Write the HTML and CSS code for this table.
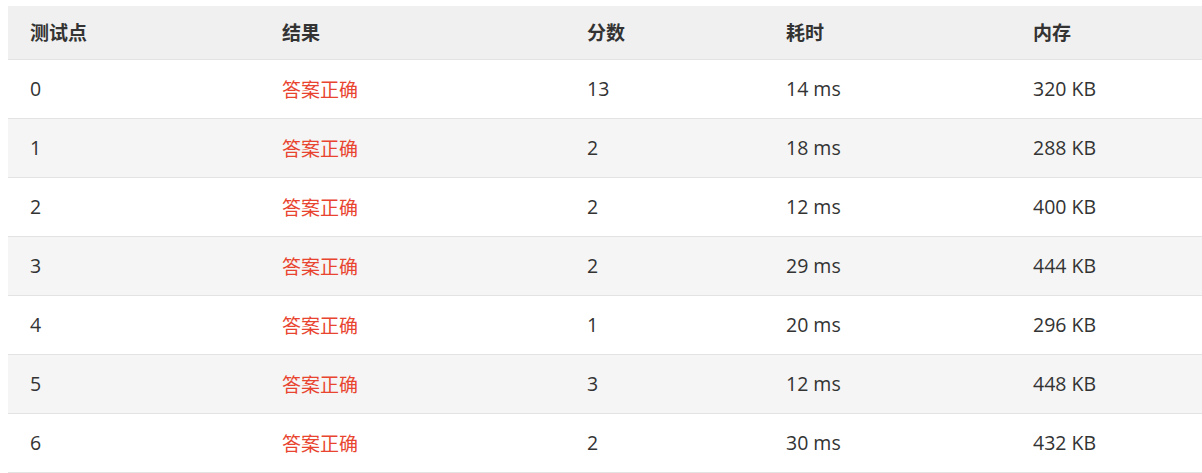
FILE: index.html
```html
<!DOCTYPE html>
<html lang="zh-CN">
<head>
<meta charset="utf-8">
<title>测试点结果</title>
<link rel="stylesheet" href="styles.css">
</head>
<body>
<table class="result-table">
  <colgroup>
    <col class="c1"><col class="c2"><col class="c3"><col class="c4"><col class="c5">
  </colgroup>
  <thead>
    <tr><th>测试点</th><th>结果</th><th>分数</th><th>耗时</th><th>内存</th></tr>
  </thead>
  <tbody>
    <tr><td>0</td><td class="ok">答案正确</td><td>13</td><td>14 ms</td><td>320 KB</td></tr>
    <tr><td>1</td><td class="ok">答案正确</td><td>2</td><td>18 ms</td><td>288 KB</td></tr>
    <tr><td>2</td><td class="ok">答案正确</td><td>2</td><td>12 ms</td><td>400 KB</td></tr>
    <tr><td>3</td><td class="ok">答案正确</td><td>2</td><td>29 ms</td><td>444 KB</td></tr>
    <tr><td>4</td><td class="ok">答案正确</td><td>1</td><td>20 ms</td><td>296 KB</td></tr>
    <tr><td>5</td><td class="ok">答案正确</td><td>3</td><td>12 ms</td><td>448 KB</td></tr>
    <tr><td>6</td><td class="ok">答案正确</td><td>2</td><td>30 ms</td><td>432 KB</td></tr>
  </tbody>
</table>
</body>
</html>
```
FILE: styles.css
```css
html, body {
  margin: 0;
  padding: 0;
  background: #fff;
  overflow: hidden;
}
body {
  padding: 6px 0 0 8px;
  font-family: "Open Sans", "Noto Sans CJK SC", sans-serif;
  font-size: 19.5px;
  color: #333;
}
.result-table {
  border-collapse: collapse;
  table-layout: fixed;
  width: 1240px;
}
.c1 { width: 252px; }
.c2 { width: 305px; }
.c3 { width: 199px; }
.c4 { width: 247px; }
.c5 { width: 237px; }
.result-table th,
.result-table td {
  text-align: left;
  padding: 0 0 0 22px;
  vertical-align: middle;
  white-space: nowrap;
}
.result-table thead tr {
  background: #f0f0f0;
  height: 53px;
}
.result-table th {
  font-size: 19px;
  font-weight: 700;
  color: #333;
  border-bottom: 1px solid #e3e3e3;
}
.result-table tbody tr {
  height: 59px;
}
.result-table td {
  border-bottom: 1px solid #e3e3e3;
}
.result-table tbody tr:nth-child(even) {
  background: #f5f5f5;
}
.result-table td.ok {
  font-size: 19px;
  color: #e8442f;
}
```
